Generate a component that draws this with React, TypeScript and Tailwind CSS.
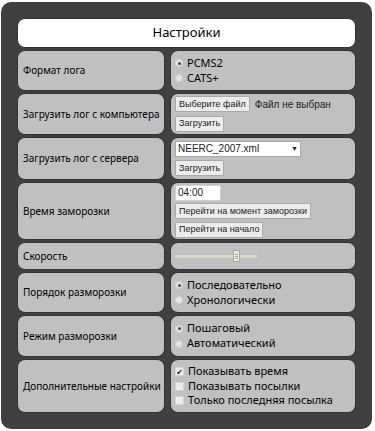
import { useState } from "react";

const labelFont = { fontFamily: '"Noto Sans", "DejaVu Sans", sans-serif' };
const uiFont = { fontFamily: '"Liberation Sans", Arial, sans-serif' };

function Radio({ checked, label }: { checked?: boolean; label: string }) {
  return (
    <div className="flex items-center gap-[4px] h-[15px] whitespace-nowrap">
      <span className="w-[8px] h-[8px] rounded-full bg-[#e4e4e4] border border-[#cfcfcf] flex items-center justify-center">
        {checked && <span className="w-[3px] h-[3px] rounded-full bg-[#444]" />}
      </span>
      <span>{label}</span>
    </div>
  );
}

function Check({ checked, label }: { checked?: boolean; label: string }) {
  return (
    <div className="flex items-center gap-[4px] h-[14.5px] whitespace-nowrap">
      <span className="w-[9px] h-[9px] rounded-[1px] bg-[#ececec] border border-[#d4d4d4] flex items-center justify-center text-[8px] leading-none text-[#222]">
        {checked && "✔"}
      </span>
      <span>{label}</span>
    </div>
  );
}

function Btn({ children }: { children: React.ReactNode }) {
  return (
    <button
      style={uiFont}
      className="h-[16px] px-[3px] text-[9px] leading-none whitespace-nowrap text-[#222] bg-[#ececec] border border-[#a9a9a9] rounded-[1px]"
    >
      {children}
    </button>
  );
}

function Row({ h, label, children }: { h: string; label: string; children: React.ReactNode }) {
  return (
    <div className={`grid grid-cols-[148px_1fr] gap-x-[5px] ${h}`}>
      <div className="bg-[#c0c0c0] border border-[#333] rounded-[8px] flex items-center pl-[5px] text-[10px] text-black whitespace-nowrap">
        {label}
      </div>
      <div className="bg-[#c0c0c0] border border-[#333] rounded-[8px] flex flex-col items-start justify-center pl-[4px] text-[11px] text-black">
        {children}
      </div>
    </div>
  );
}

export default function App() {
  const [speed, setSpeed] = useState(77);

  return (
    <div className="bg-white w-[375px] h-[431px] pt-[2px] pl-[1px]" style={labelFont}>
      <div className="w-[371px] h-[427px] bg-[#404040] rounded-[10px] p-4 flex flex-col gap-[2px]">
        <div className="h-[30px] shrink-0 bg-white border border-[#333] rounded-[8px] flex items-center justify-center text-[13px] text-black">
          Настройки
        </div>

        <Row h="h-[41px]" label="Формат лога">
          <Radio checked label="PCMS2" />
          <Radio label="CATS+" />
        </Row>

        <Row h="h-[42px]" label="Загрузить лог с компьютера">
          <div className="flex items-center gap-[5px] whitespace-nowrap">
            <Btn>Выберите файл</Btn>
            <span style={uiFont} className="text-[10px] text-[#222]">Файл не выбран</span>
          </div>
          <div className="mt-[2px]">
            <Btn>Загрузить</Btn>
          </div>
        </Row>

        <Row h="h-[43px]" label="Загрузить лог с сервера">
          <div
            style={uiFont}
            className="w-[126px] h-[16px] bg-white border border-[#a9a9a9] flex items-center justify-between px-[2px] text-[10px] text-[#222]"
          >
            <span>NEERC_2007.xml</span>
            <span className="text-[7px]">▼</span>
          </div>
          <div className="mt-[2px]">
            <Btn>Загрузить</Btn>
          </div>
        </Row>

        <Row h="h-[58px]" label="Время заморозки">
          <div
            style={uiFont}
            className="w-[46px] h-[16px] bg-white border border-[#d0d0d0] flex items-center px-[2px] text-[10px] text-[#222]"
          >
            04:00
          </div>
          <div className="mt-[1px]">
            <Btn>Перейти на момент заморозки</Btn>
          </div>
          <div className="mt-[1px]">
            <Btn>Перейти на начало</Btn>
          </div>
        </Row>

        <Row h="h-[28px]" label="Скорость">
          <div className="relative w-[82px] h-[14px] flex items-center">
            <div className="w-full h-[3px] bg-[#dcd8d0] rounded-full" />
            <div
              className="absolute top-[1px] w-[7px] h-[12px] bg-[#ece9e2] border border-[#a8a49a] rounded-[1px] flex flex-col items-center justify-center gap-[1px]"
              style={{ left: `${(speed / 100) * 75}px` }}
              onClick={() => setSpeed(speed)}
            >
              <span className="w-[3px] h-px bg-[#a8a49a]" />
              <span className="w-[3px] h-px bg-[#a8a49a]" />
              <span className="w-[3px] h-px bg-[#a8a49a]" />
            </div>
          </div>
        </Row>

        <Row h="h-[41px]" label="Порядок разморозки">
          <Radio checked label="Последовательно" />
          <Radio label="Хронологически" />
        </Row>

        <Row h="h-[42px]" label="Режим разморозки">
          <Radio checked label="Пошаговый" />
          <Radio label="Автоматический" />
        </Row>

        <Row h="h-[54px]" label="Дополнительные настройки">
          <Check checked label="Показывать время" />
          <Check label="Показывать посылки" />
          <Check label="Только последняя посылка" />
        </Row>
      </div>
    </div>
  );
}
